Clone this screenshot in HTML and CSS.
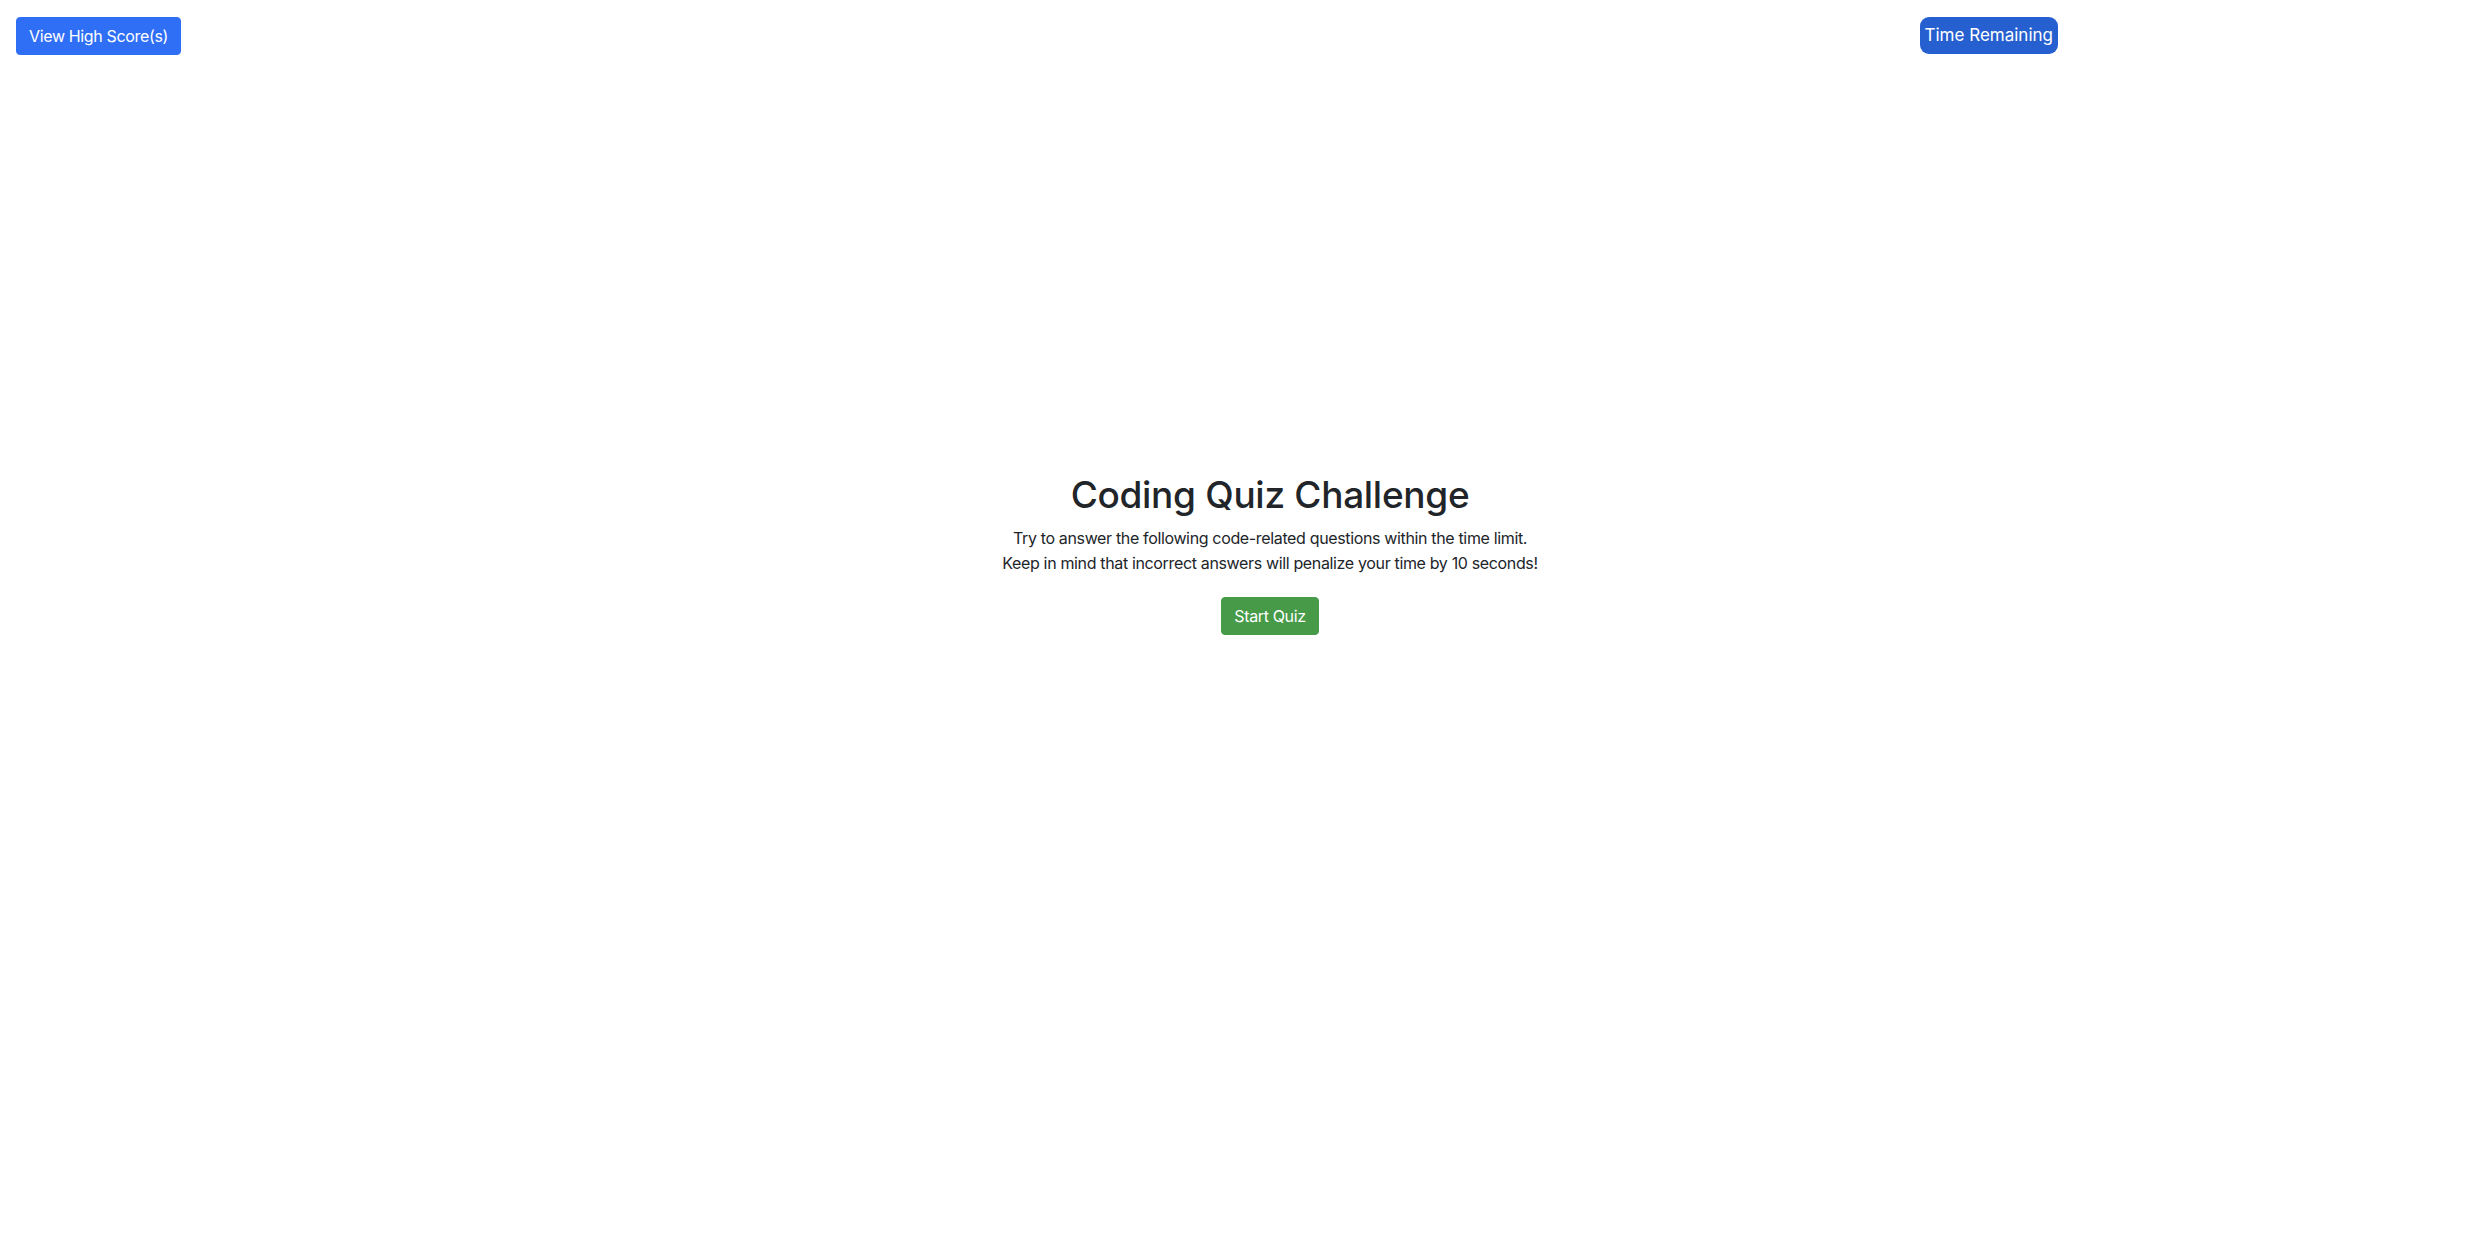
FILE: index.html
```html
<!DOCTYPE html>
<html lang="en">
<head>
<meta charset="utf-8">
<title>Coding Quiz</title>
<link rel="stylesheet" href="styles.css">
</head>
<body>
<header class="topbar">
  <button class="btn btn-primary">View High Score(s)</button>
  <div class="timer">Time Remaining</div>
</header>
<main class="intro">
  <h1 class="title">Coding Quiz Challenge</h1>
  <p class="desc">Try to answer the following code-related questions within the time limit.<br>Keep in mind that incorrect answers will penalize your time by 10 seconds!</p>
  <button class="btn btn-success">Start Quiz</button>
</main>
</body>
</html>
```

FILE: styles.css
```css
* { box-sizing: border-box; }
html, body { margin: 0; padding: 0; }
body {
  width: 2474px;
  height: 1237px;
  background: #fff;
  color: #212529;
  font-family: Inter, "Noto Sans", sans-serif;
  font-size: 16px;
  line-height: 1.5;
}
.topbar {
  display: flex;
  align-items: flex-start;
  padding: 17px 0 0 16px;
  width: 2058px;
  justify-content: space-between;
}
.btn {
  font-family: Inter, "Noto Sans", sans-serif;
  font-size: 16px;
  line-height: 24px;
  letter-spacing: -0.35px;
  padding: 6px 12px;
  border: 1px solid transparent;
  border-radius: 4px;
  color: #fff;
  cursor: pointer;
}
.btn-primary { background: #2f6ff6; border-color: #2f6ff6; }
.btn-success { background: #469a48; border-color: #469a48; }
.timer {
  background: #2660d0;
  color: #fff;
  font-size: 17px;
  line-height: 27px;
  padding: 5px 5px;
  border-radius: 9px;
}
.intro {
  display: flex;
  flex-direction: column;
  align-items: center;
  margin-top: 418px;
  padding-left: 66px;
}
.title {
  margin: 0 0 9px;
  font-size: 37px;
  font-weight: 500;
  line-height: 1.2;
  letter-spacing: -0.3px;
}
.desc {
  margin: 0 0 21px;
  text-align: center;
  font-size: 16px;
  line-height: 25px;
  letter-spacing: -0.35px;
}
```
